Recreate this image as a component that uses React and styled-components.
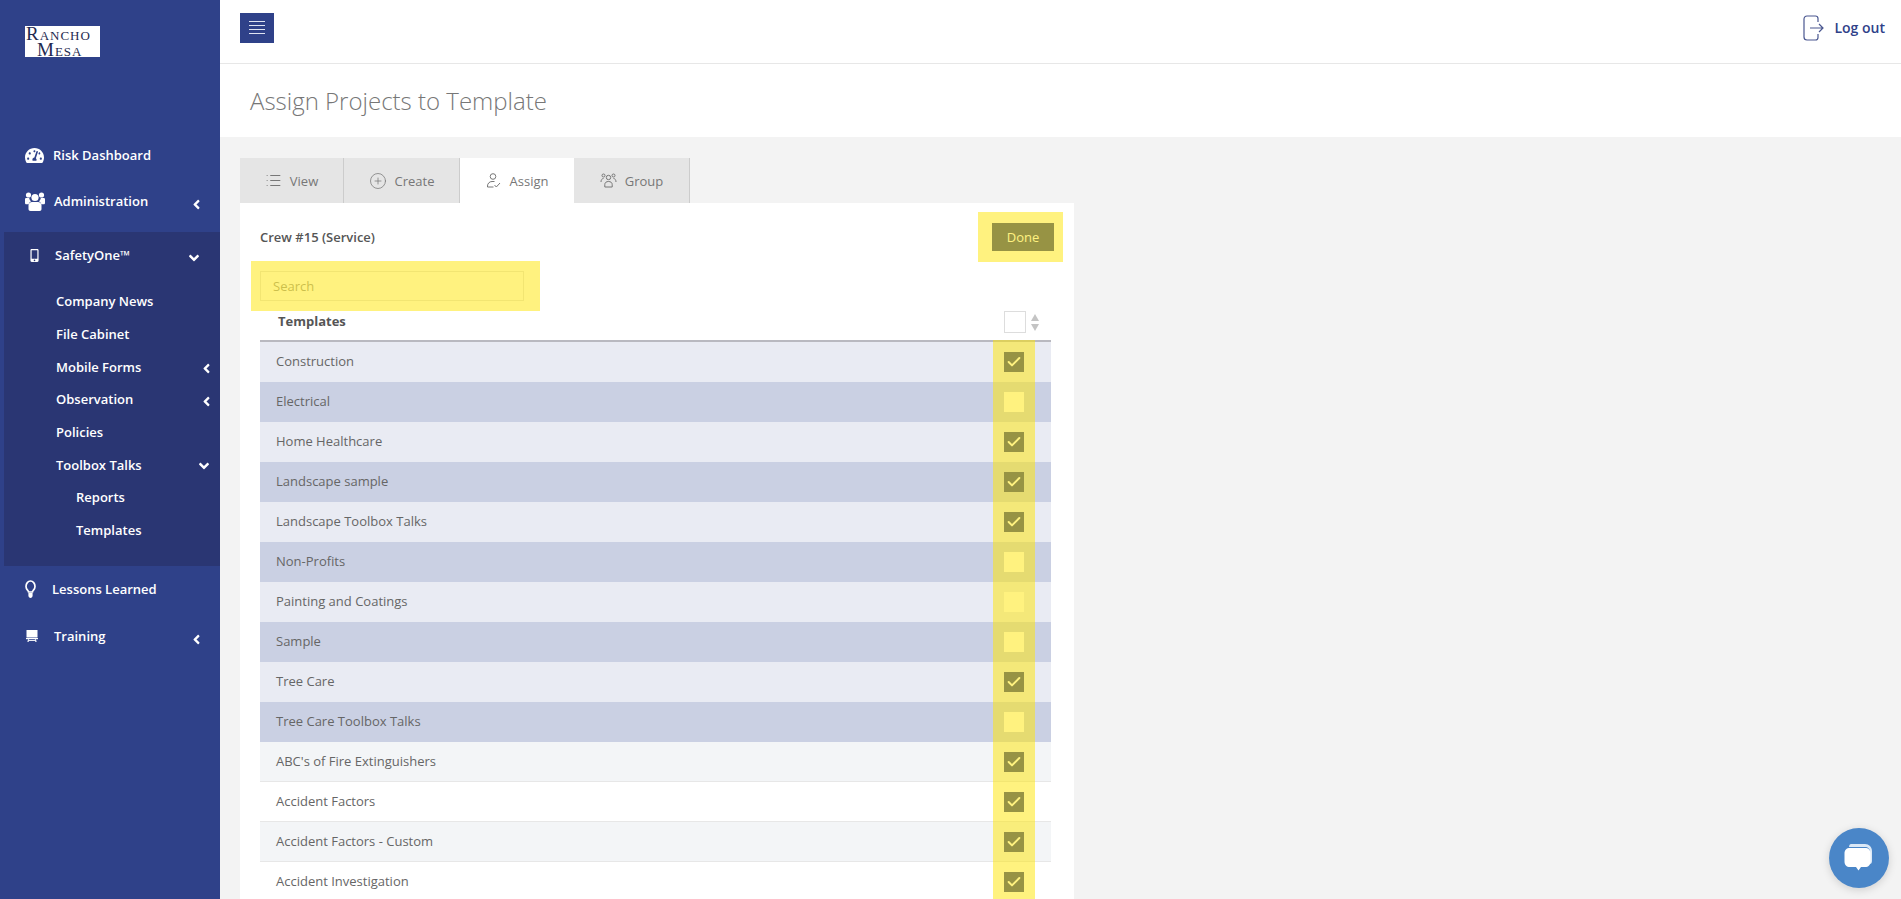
import React from 'react';
import styled, { createGlobalStyle } from 'styled-components';
import { FaTachometerAlt, FaMobileAlt, FaAngleLeft, FaAngleDown } from 'react-icons/fa';
import { List, CirclePlus, Check } from 'lucide-react';

const templates = [
    { name: 'Construction', checked: true, tone: 'light' },
    { name: 'Electrical', checked: false, tone: 'dark' },
    { name: 'Home Healthcare', checked: true, tone: 'light' },
    { name: 'Landscape sample', checked: true, tone: 'dark' },
    { name: 'Landscape Toolbox Talks', checked: true, tone: 'light' },
    { name: 'Non-Profits', checked: false, tone: 'dark' },
    { name: 'Painting and Coatings', checked: false, tone: 'light' },
    { name: 'Sample', checked: false, tone: 'dark' },
    { name: 'Tree Care', checked: true, tone: 'light' },
    { name: 'Tree Care Toolbox Talks', checked: false, tone: 'dark' },
    { name: "ABC's of Fire Extinguishers", checked: true, tone: 'grey' },
    { name: 'Accident Factors', checked: true, tone: 'white' },
    { name: 'Accident Factors - Custom', checked: true, tone: 'grey' },
    { name: 'Accident Investigation', checked: true, tone: 'white' },
];

const subItems = [
    { label: 'Company News' },
    { label: 'File Cabinet' },
    { label: 'Mobile Forms', arrow: 'left' },
    { label: 'Observation', arrow: 'left' },
    { label: 'Policies' },
    { label: 'Toolbox Talks', arrow: 'down' },
];

function UsersIcon() {
    return (
        <svg width="20" height="20" viewBox="0 0 20 20" fill="#fff">
            <circle cx="3.5" cy="4" r="2.6" />
            <circle cx="16.500" cy="4" r="2.6" />
            <circle cx="10" cy="6.500" r="3.600" />
            <path d="M0 8.200c0-.8.600-1.200 1.400-1.200h2.800c.2 1.400.9 2.600 2 3.300-1.300.6-2.200 1.700-2.500 3H1.400C.6 13.300 0 12.800 0 12z" />
            <path d="M20 8.200c0-.8-.6-1.200-1.400-1.200h-2.800c-.2 1.400-.9 2.600-2 3.300 1.300.6 2.200 1.700 2.500 3h2.300c.8 0 1.400-.5 1.400-1.300z" />
            <path d="M7 11h6c2 0 3.500 1.500 3.500 3.500V18c0 1-.7 2-2 2h-9c-1.300 0-2-1-2-2v-3.500C3.500 12.500 5 11 7 11z" />
        </svg>
    );
}

function BulbIcon() {
    return (
        <svg width="11" height="18" viewBox="0 0 11 18" fill="none">
            <path d="M2.800 10.500C1.700 9.500 1 8.300 1 6.500 1 3.500 3 1 5.500 1S10 3.500 10 6.500c0 1.800-.7 3-1.800 4-.5.5-.8 1-.8 1.500H3.600c0-.5-.3-1-.8-1.500z" stroke="#fff" strokeWidth="1.700" />
            <path d="M3.400 13h4.200v2.500c0 1.500-1 2.500-2.100 2.500s-2.100-1-2.100-2.500z" fill="#fff" />
        </svg>
    );
}

function TrainingIcon() {
    return (
        <svg width="12" height="12" viewBox="0 0 12 12" fill="#fff">
            <rect x="0.500" y="0" width="11" height="7.500" />
            <rect x="0" y="8" width="12" height="1.200" />
            <path d="M2 9.200h1.200l-.6 2.800H1.400zM8.800 9.200H10l.6 2.800H9.400z" />
            <rect x="3" y="10" width="6" height="0.900" />
        </svg>
    );
}

function AssignIcon() {
    return (
        <svg width="17" height="17" viewBox="0 0 17 17" fill="none" stroke="#777" strokeWidth="1">
            <circle cx="8" cy="4.500" r="2.800" />
            <path d="M9.500 9.500H7c-2.500 0-4.500 2-4.500 4.500v1h6" />
            <path d="M9.500 13l1.800 2 3.700-4" />
        </svg>
    );
}

function GroupIcon() {
    return (
        <svg width="17" height="17" viewBox="0 0 17 17" fill="none" stroke="#777" strokeWidth="1">
            <circle cx="8.500" cy="5.500" r="2.200" />
            <path d="M4.800 15v-2.500c0-2 1.600-3 3.700-3s3.700 1 3.700 3V15z" />
            <circle cx="3.500" cy="3.500" r="1.500" />
            <circle cx="13.500" cy="3.500" r="1.500" />
            <path d="M1 10c0-2 1-3.500 2.500-3.500M16 10c0-2-1-3.500-2.500-3.500" />
        </svg>
    );
}

function LogoutIcon() {
    return (
        <svg width="21" height="26" viewBox="0 0 21 26" fill="none" stroke="#4a5790" strokeWidth="1.200">
            <path d="M15 7V3.500C15 2 14 1 12.500 1H4C2.200 1 1 2.200 1 4v18c0 1.800 1.200 3 3 3h8.500c1.500 0 2.500-1 2.500-2.500V19" />
            <path d="M7 13h13M16 9l4 4-4 4" />
        </svg>
    );
}

function ChatIcon() {
    return (
        <svg width="32" height="30" viewBox="0 0 32 30">
            <path d="M8 1h14c4 0 7 3 7 7v10c0 2-1 3-2 3V9c0-3-2-5-5-5H6c0-2 1-3 2-3z" fill="#dbe8f6" />
            <path d="M7 5h15c3.500 0 5.500 2 5.500 5.500v8c0 3.500-2 5.500-5.500 5.500h-4l-2.500 3.500-2.500-3.500H7c-3.500 0-5.500-2-5.500-5.500v-8C1.500 7 3.500 5 7 5z" fill="#fff" />
        </svg>
    );
}

export default function App() {
    return (
        <Page>
            <GlobalStyle />

            <Sidebar>
                <Logo>
                    <LogoLine>Rancho</LogoLine>
                    <LogoLine $indent>Mesa</LogoLine>
                </Logo>

                <Nav>
                    <NavRow>
                        <NavIcon $width={28}><FaTachometerAlt size={19} /></NavIcon>
                        Risk Dashboard
                    </NavRow>
                    <NavRow>
                        <NavIcon $width={29}><UsersIcon /></NavIcon>
                        Administration
                        <NavArrow><FaAngleLeft size={15} /></NavArrow>
                    </NavRow>

                    <OpenGroup>
                        <NavRow $inGroup>
                            <NavIcon $width={30} $shift={3}><FaMobileAlt size={13} /></NavIcon>
                            SafetyOne™
                            <NavArrow $down><FaAngleDown size={16} /></NavArrow>
                        </NavRow>
                        <SubList>
                            {subItems.map((item) => (
                                <SubRow key={item.label}>
                                    {item.label}
                                    {item.arrow === 'left' && <SubArrow><FaAngleLeft size={15} /></SubArrow>}
                                    {item.arrow === 'down' && <SubArrow $down><FaAngleDown size={16} /></SubArrow>}
                                </SubRow>
                            ))}
                            <SubRow $nested>Reports</SubRow>
                            <SubRow $nested>Templates</SubRow>
                        </SubList>
                    </OpenGroup>

                    <NavRow>
                        <NavIcon $width={27}><BulbIcon /></NavIcon>
                        Lessons Learned
                    </NavRow>
                    <NavRow $gapTop>
                        <NavIcon $width={29} $shift={1}><TrainingIcon /></NavIcon>
                        Training
                        <NavArrow><FaAngleLeft size={15} /></NavArrow>
                    </NavRow>
                </Nav>
            </Sidebar>

            <Main>
                <TopBar>
                    <MenuButton>
                        <span /><span /><span /><span />
                    </MenuButton>
                    <Logout>
                        <LogoutIcon />
                        Log out
                    </Logout>
                </TopBar>

                <TitleBand>Assign Projects to Template</TitleBand>

                <Content>
                    <Tabs>
                        <Tab $width={104}><List size={17} strokeWidth={1.600} />View</Tab>
                        <Tab $width={116}><CirclePlus size={18} strokeWidth={1} />Create</Tab>
                        <Tab $width={114} $active><AssignIcon />Assign</Tab>
                        <Tab $width={116}><GroupIcon />Group</Tab>
                    </Tabs>

                    <Panel>
                        <DoneMark />
                        <SearchMark />
                        <ColumnMark />

                        <PanelHead>
                            <CrewName>Crew #15 (Service)</CrewName>
                            <DoneButton>Done</DoneButton>
                        </PanelHead>

                        <SearchInput placeholder="Search" />

                        <Table>
                            <HeadRow>
                                <HeadTitle>Templates</HeadTitle>
                                <HeadBox />
                                <SortArrows>
                                    <SortUp />
                                    <SortDown />
                                </SortArrows>
                            </HeadRow>

                            {templates.map((template) => (
                                <Row key={template.name} $tone={template.tone}>
                                    <RowName>{template.name}</RowName>
                                    <CheckBox $checked={template.checked}>
                                        {template.checked && <Check size={16} strokeWidth={3} />}
                                    </CheckBox>
                                </Row>
                            ))}
                        </Table>
                    </Panel>
                </Content>
            </Main>

            <ChatBubble>
                <ChatIcon />
            </ChatBubble>
        </Page>
    );
}

const rowColors = {
    light: '#e9ebf3',
    dark: '#cad0e3',
    grey: '#f3f5f7',
    white: '#ffffff',
};

const GlobalStyle = createGlobalStyle`
    html, body {
        height: 100%;
        margin: 0;
        overflow: hidden;
    }

    body {
        font-family: "Open Sans", "Liberation Sans", sans-serif;
    }

    * {
        box-sizing: border-box;
    }
`;

const Page = styled.div`
    display: flex;

    height: 899px;

    overflow: hidden;

    background-color: #f3f3f3;
`;

const Sidebar = styled.aside`
    background-color: #2f4189;

    color: #ffffff;

    flex: 0 0 220px;

    padding-top: 26px;
`;

const Logo = styled.div`
    background-color: #ffffff;

    color: #1f2a50;

    font-family: "Liberation Serif", serif;

    font-size: 19px;

    font-variant: small-caps;

    height: 31px;

    letter-spacing: 1px;

    line-height: 15.5px;

    margin-left: 25px;

    white-space: nowrap;

    width: 75px;
`;

const LogoLine = styled.div`
    padding-left: ${(props) => (props.$indent ? '12px' : '1px')};
`;

const Nav = styled.nav`
    display: flex;

    flex-direction: column;

    margin-top: 75px;
`;

const NavRow = styled.div`
    align-items: center;

    display: flex;

    font-size: 13px;

    font-weight: 600;

    height: 46px;

    margin-top: ${(props) => (props.$gapTop ? '1px' : '0')};

    padding-left: ${(props) => (props.$inGroup ? '21px' : '25px')};

    position: relative;
`;

const NavIcon = styled.span`
    align-items: center;

    display: flex;

    padding-left: ${(props) => props.$shift || 0}px;

    width: ${(props) => props.$width}px;
`;

const NavArrow = styled.span`
    display: flex;

    position: absolute;

    right: ${(props) => (props.$down ? '18px' : '16px')};

    top: ${(props) => (props.$down ? '18px' : '19px')};
`;

const OpenGroup = styled.div`
    background-color: #2a3673;

    margin: 8px 0 0 4px;

    padding-bottom: 19px;
`;

const SubList = styled.div`
    display: flex;

    flex-direction: column;

    margin-top: 7px;
`;

const SubRow = styled.div`
    align-items: center;

    display: flex;

    font-size: 13px;

    font-weight: 600;

    height: 32.7px;

    padding-left: ${(props) => (props.$nested ? '72px' : '52px')};

    position: relative;
`;

const SubArrow = styled.span`
    display: flex;

    position: absolute;

    right: ${(props) => (props.$down ? '8px' : '6px')};

    top: ${(props) => (props.$down ? '10px' : '11px')};
`;

const Main = styled.main`
    display: flex;

    flex: 1;

    flex-direction: column;

    min-width: 0;
`;

const TopBar = styled.header`
    align-items: center;

    background-color: #ffffff;

    border-bottom: 1px solid #e7e7e7;

    display: flex;

    flex: 0 0 64px;

    justify-content: space-between;

    padding: 0 16px 8px 20px;
`;

const MenuButton = styled.button`
    align-items: center;

    background-color: #2f4189;

    border: none;

    display: flex;

    flex-direction: column;

    gap: 3px;

    height: 30px;

    justify-content: center;

    padding: 0;

    width: 34px;

    span {
        background-color: #dfe3f2;

        display: block;

        height: 1px;

        width: 16px;
    }
`;

const Logout = styled.div`
    align-items: center;

    color: #2f4189;

    display: flex;

    font-size: 14px;

    font-weight: 600;

    gap: 10px;
`;

const TitleBand = styled.h1`
    background-color: #ffffff;

    color: #777777;

    flex: 0 0 73px;

    font-size: 24px;

    font-weight: 300;

    line-height: 73px;

    margin: 0;

    padding-left: 30px;
`;

const Content = styled.div`
    flex: 1;

    min-height: 0;

    padding: 21px 0 0 20px;
`;

const Tabs = styled.div`
    display: flex;

    height: 45px;
`;

const Tab = styled.div`
    align-items: center;

    background-color: ${(props) => (props.$active ? '#ffffff' : '#e5e5e5')};

    border-right: 1px solid ${(props) => (props.$active ? '#ffffff' : '#cccccc')};

    color: #777777;

    display: flex;

    font-size: 13px;

    gap: 8px;

    justify-content: center;

    width: ${(props) => props.$width}px;
`;

const Panel = styled.section`
    background-color: #ffffff;

    height: 720px;

    padding: 20px 23px 0 20px;

    position: relative;

    width: 834px;
`;

const Mark = styled.div`
    background-color: rgba(255, 230, 0, 0.5);

    pointer-events: none;

    position: absolute;

    z-index: 2;
`;

const DoneMark = styled(Mark)`
    height: 50px;

    left: 738px;

    top: 9px;

    width: 85px;
`;

const SearchMark = styled(Mark)`
    height: 50px;

    left: 11px;

    top: 58px;

    width: 289px;
`;

const ColumnMark = styled(Mark)`
    bottom: 0;

    left: 753px;

    top: 137px;

    width: 42px;
`;

const PanelHead = styled.div`
    align-items: center;

    display: flex;

    height: 28px;

    justify-content: space-between;

    margin-right: -3px;
`;

const CrewName = styled.div`
    color: #555555;

    font-size: 13px;

    font-weight: 600;
`;

const DoneButton = styled.button`
    background-color: #2f4189;

    border: none;

    color: #ffffff;

    font-family: inherit;

    font-size: 13px;

    height: 28px;

    padding: 0;

    width: 62px;
`;

const SearchInput = styled.input`
    border: 1px solid #e5e5e5;

    display: block;

    font-family: inherit;

    font-size: 13px;

    height: 30px;

    margin-top: 20px;

    outline: none;

    padding: 0 12px;

    width: 264px;

    &::placeholder {
        color: #999999;
    }
`;

const Table = styled.div`
    display: flex;

    flex-direction: column;
`;

const HeadRow = styled.div`
    align-items: center;

    border-bottom: 2px solid #b9b9c0;

    display: flex;

    height: 41px;

    padding: 0 12px 0 18px;
`;

const HeadTitle = styled.div`
    color: #555555;

    flex: 1;

    font-size: 13px;

    font-weight: 700;
`;

const HeadBox = styled.div`
    background-color: #ffffff;

    border: 1px solid #dddddd;

    height: 22px;

    margin-top: 3px;

    width: 22px;
`;

const SortArrows = styled.div`
    display: flex;

    flex-direction: column;

    gap: 3px;

    margin-left: 5px;

    margin-top: 3px;
`;

const SortUp = styled.div`
    border-bottom: 7px solid #c4c4c4;

    border-left: 4px solid transparent;

    border-right: 4px solid transparent;
`;

const SortDown = styled.div`
    border-left: 4px solid transparent;

    border-right: 4px solid transparent;

    border-top: 7px solid #c4c4c4;
`;

const Row = styled.div`
    align-items: center;

    background-color: ${(props) => rowColors[props.$tone]};

    border-bottom: ${(props) => (props.$tone === 'grey' || props.$tone === 'white' ? '1px solid #e7e7e7' : 'none')};

    color: #666666;

    display: flex;

    flex: 0 0 40px;

    font-size: 13px;

    justify-content: space-between;

    padding: 0 27px 0 16px;
`;

const RowName = styled.span`
    margin-bottom: 2px;
`;

const CheckBox = styled.div`
    align-items: center;

    background-color: ${(props) => (props.$checked ? '#2f4189' : '#ffffff')};

    color: #ffffff;

    display: flex;

    height: 20px;

    justify-content: center;

    width: 20px;
`;

const ChatBubble = styled.div`
    align-items: center;

    background-color: #4a86c8;

    border-radius: 50%;

    bottom: 11px;

    box-shadow: 0 2px 8px rgba(0, 0, 0, 0.15);

    display: flex;

    height: 60px;

    justify-content: center;

    position: fixed;

    right: 12px;

    width: 60px;

    z-index: 3;
`;
